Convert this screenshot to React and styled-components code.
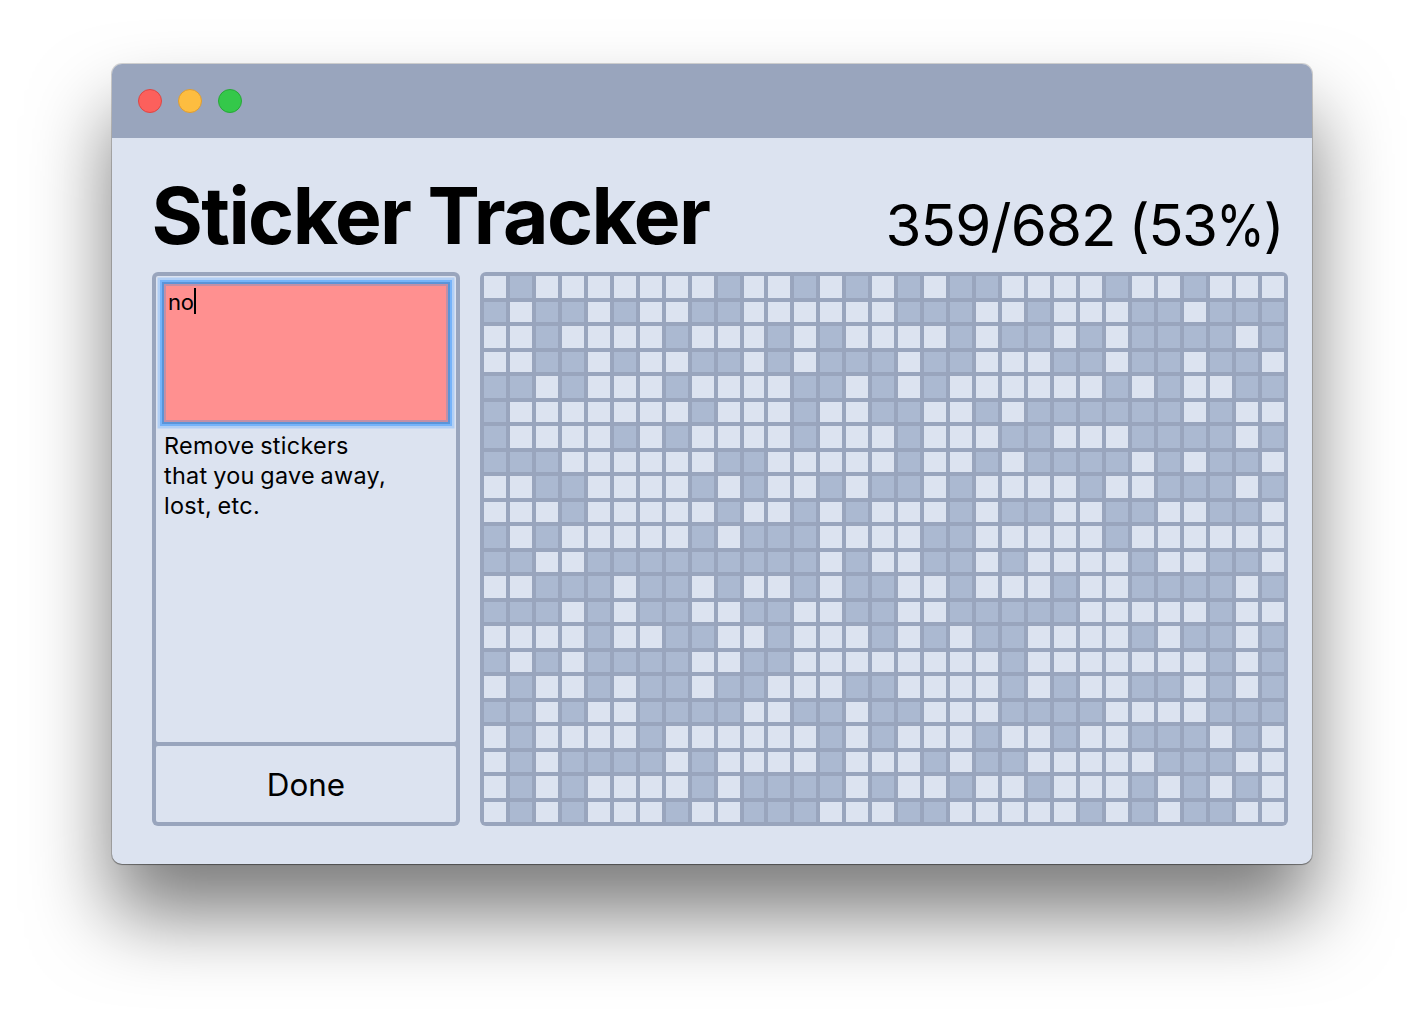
import React from "react";
import styled, { createGlobalStyle } from "styled-components";

const palette = {
  frame: "#99a5bd",
  surface: "#dce3f0",
  owned: "#abb9d1",
};

const GlobalStyle = createGlobalStyle`
  * { box-sizing: border-box; }
  body {
    margin: 0;
    background: #fff;
    color: #000;
    font-family: Inter, "Liberation Sans", sans-serif;
  }
`;

const Desktop = styled.div`
  display: flex;
  justify-content: center;
  height: 1024px;
  padding-top: 64px;
  overflow: hidden;
`;

const Window = styled.main`
  display: flex;
  flex-direction: column;
  width: 1200px;
  height: 800px;
  border-radius: 10px;
  background: ${palette.surface};
  box-shadow:
    0 0 0 1px rgba(0, 0, 0, 0.16),
    0 1px 1px rgba(0, 0, 0, 0.3),
    0 50px 80px rgba(0, 0, 0, 0.52);
`;

const TitleBar = styled.div`
  display: flex;
  align-items: center;
  gap: 16px;
  flex: none;
  height: 74px;
  padding-left: 26px;
  border-radius: 10px 10px 0 0;
  background: ${palette.frame};
`;

const WindowButton = styled.span`
  width: 24px;
  height: 24px;
  border: 1px solid ${(p) => p.$edge};
  border-radius: 50%;
  background: ${(p) => p.$fill};
`;

const Header = styled.header`
  display: flex;
  align-items: flex-end;
  justify-content: space-between;
  flex: none;
  height: 134px;
  padding: 0 29px 16px 39.5px;
`;

const Title = styled.h1`
  margin: 0;
  font-size: 78.5px;
  font-weight: 700;
  line-height: 80px;
  letter-spacing: -1.6px;
`;

const Count = styled.div`
  padding-bottom: 1px;
  font-size: 58.2px;
  line-height: 60px;
  letter-spacing: -0.8px;
  white-space: pre;
`;

const Percent = styled.span`
  letter-spacing: -1.6px;
  word-spacing: -2px;
`;

const PercentSign = styled.span`
  display: inline-block;
  margin: 0 -4.5px 0 -4px;
  transform: scaleX(0.85);
`;

const Content = styled.div`
  display: flex;
  gap: 20px;
  padding: 0 24px 0 40px;
`;

const Panel = styled.section`
  display: flex;
  flex-direction: column;
  gap: 4px;
  width: 308px;
  height: 554px;
  padding: 4px;
  border-radius: 6px;
  background: ${palette.frame};
`;

const PanelBody = styled.div`
  flex: 1;
  padding: 6px 6px 0;
  border-radius: 2px;
  background: ${palette.surface};
`;

const Entry = styled.div`
  display: flex;
  align-items: flex-start;
  height: 142px;
  padding: 4px 4px;
  border: 2px solid #5a94d8;
  background: #ff9090;
  box-shadow:
    inset 0 0 0 2px #c38fa6,
    0 0 0 2px #76b3f9,
    0 0 0 4.5px #b1cff5;
  font-size: 22px;
  line-height: 28px;
  letter-spacing: -0.2px;
`;

const Caret = styled.span`
  width: 2px;
  height: 26px;
  background: #000;
`;

const Hint = styled.p`
  width: 240px;
  margin: 7px 0 0 2px;
  font-size: 23.4px;
  line-height: 30px;
  letter-spacing: 0.3px;
  word-spacing: -1.2px;
`;

const DoneButton = styled.button`
  height: 76px;
  padding: 2px 0 0;
  border: 0;
  border-radius: 2px;
  background: ${palette.surface};
  color: inherit;
  font: 400 31.4px/38px Inter, "Liberation Sans", sans-serif;
`;

const Grid = styled.div`
  display: grid;
  grid-template-columns: repeat(10, 22px) 20px repeat(20, 22px);
  grid-template-rows: repeat(11, 22px 20px);
  gap: 4px;
  padding: 4px;
  border-radius: 6px;
  background: ${palette.frame};
`;

const Cell = styled.span`
  background: ${(p) => (p.$missing ? palette.surface : palette.owned)};
`;

/* One string per grid row: 1 is a missing sticker, 0 an owned one. */
const stickers = [
  "1011111110" + "11010101001" + "1110110111",
  "0100101100" + "11111100011" + "0111001000",
  "1101111011" + "10101111010" + "0101000010",
  "1100101100" + "10100010011" + "1001001001",
  "0010111011" + "11001010111" + "1110101100",
  "0111111101" + "11011001101" + "0000001011",
  "0111101011" + "11011101110" + "0111000010",
  "0001111110" + "01111101101" + "0000101001",
  "1100111101" + "01101001011" + "1101100010",
  "1110111110" + "11010111010" + "0110011001",
  "0101111101" + "00011110011" + "1110111111",
  "0011000000" + "00010110010" + "1111011001",
  "1100010010" + "11010011011" + "1011000010",
  "0001010011" + "00110011000" + "0011111011",
  "1111011001" + "10111010100" + "1111010010",
  "0101000011" + "00111111110" + "1111111010",
  "1011010010" + "01110011110" + "1011001010",
  "0010110000" + "11001001110" + "0001111000",
  "1011110111" + "11101011101" + "1011000101",
  "1010000101" + "11101110100" + "1111100011",
  "1010111101" + "00001011011" + "0111010101",
  "1010111011" + "00011100111" + "1101010011",
];

const windowButtons = [
  { fill: "#fc605c", edge: "#dd4644" },
  { fill: "#fdbd40", edge: "#dd9c33" },
  { fill: "#34c84a", edge: "#27a837" },
];

export default function App() {
  return (
    <Desktop>
      <GlobalStyle />
      <Window>
        <TitleBar>
          {windowButtons.map((b) => (
            <WindowButton key={b.fill} $fill={b.fill} $edge={b.edge} />
          ))}
        </TitleBar>
        <Header>
          <Title>Sticker Tracker</Title>
          <Count>
            359/682
            <Percent>
              {" (53"}
              <PercentSign>%</PercentSign>)
            </Percent>
          </Count>
        </Header>
        <Content>
          <Panel>
            <PanelBody>
              <Entry>
                no
                <Caret />
              </Entry>
              <Hint>
                Remove stickers
                <br />
                that you gave away,
                <br />
                lost, etc.
              </Hint>
            </PanelBody>
            <DoneButton>Done</DoneButton>
          </Panel>
          <Grid>
            {stickers.flatMap((row, y) =>
              [...row].map((s, x) => <Cell key={`${y}-${x}`} $missing={s === "1"} />)
            )}
          </Grid>
        </Content>
      </Window>
    </Desktop>
  );
}
